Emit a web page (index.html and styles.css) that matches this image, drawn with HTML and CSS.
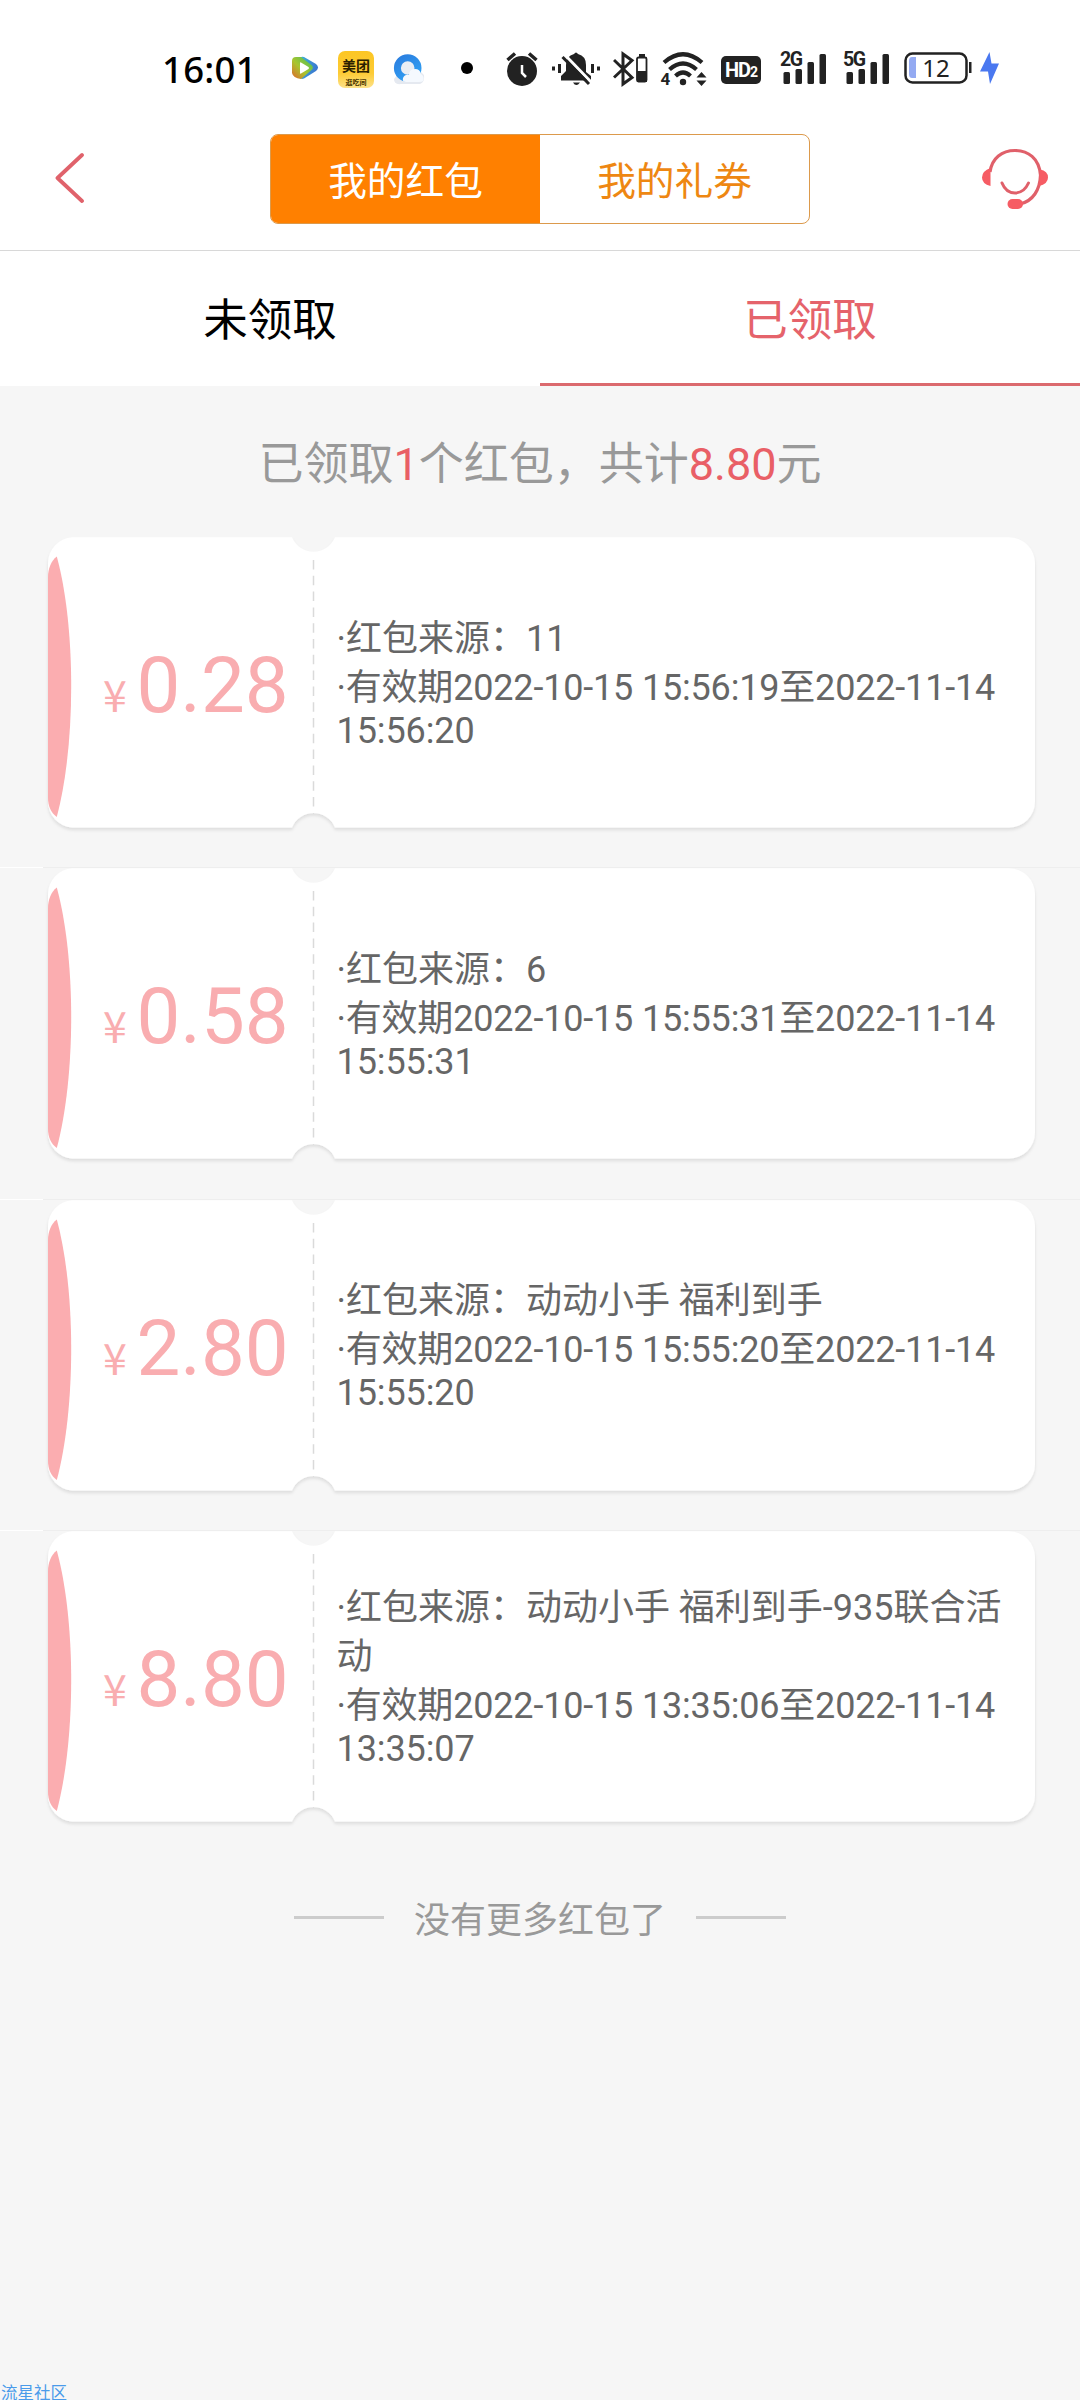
FILE: index.html
```html
<!DOCTYPE html>
<html lang="zh-CN">
<head>
<meta charset="utf-8">
<title>我的红包</title>
<link rel="stylesheet" href="styles.css">
</head>
<body>
<svg class="defs" width="0" height="0">
  <defs>
    <linearGradient id="play-a" x1="0" y1="0" x2="0.3" y2="1"><stop offset="0" stop-color="#5ac436"/><stop offset="0.5" stop-color="#e78a2a"/><stop offset="1" stop-color="#d9532c"/></linearGradient>
    <linearGradient id="play-b" x1="0" y1="0" x2="1" y2="0.4"><stop offset="0" stop-color="#3fb4d8"/><stop offset="1" stop-color="#3a78d0"/></linearGradient>
    <linearGradient id="play-c" x1="0" y1="1" x2="1" y2="0"><stop offset="0" stop-color="#e0662a"/><stop offset="0.45" stop-color="#a9c52e"/><stop offset="1" stop-color="#3fbf62"/></linearGradient>
    <linearGradient id="gold" x1="0" y1="0" x2="0" y2="1"><stop offset="0" stop-color="#fcc624"/><stop offset="0.6" stop-color="#fdcb35"/><stop offset="1" stop-color="#fde28a"/></linearGradient>
    <linearGradient id="ring" x1="0" y1="0" x2="0.6" y2="1"><stop offset="0" stop-color="#2b7fe0"/><stop offset="1" stop-color="#2f9df2"/></linearGradient>
    <filter id="ticket-shadow" x="-5%" y="-5%" width="110%" height="112%"><feDropShadow dx="0" dy="2.5" stdDeviation="1.8" flood-color="#000" flood-opacity="0.1"/></filter>
    <symbol id="ticket" viewBox="0 0 1006 310">
      <path filter="url(#ticket-shadow)" fill="#fff" d="M34 0.300H254A23.200 23.200 0 0 0 297 0.300H971A26 26 0 0 1 997 26V264.500A26 26 0 0 1 971 290.500H297A23.200 23.200 0 0 0 254 290.500H34A26 26 0 0 1 10 264.500V26A26 26 0 0 1 34 0.300Z"/>
      <path fill="#fbadb0" d="M18.800 19.500C38 90 38 208 18.800 280C13 276 10 269 10 261V40C10 32 13 24 18.800 19.500Z"/>
      <path stroke="#dadada" stroke-width="1.500" stroke-dasharray="9.500 6.300" d="M275.500 23V271"/>
    </symbol>
    <symbol id="signal" viewBox="0 0 44 34">
      <g fill="#222"><rect x="1.500" y="20" width="6.500" height="12" rx="1.500"/><rect x="13.500" y="17" width="6.500" height="15" rx="1.500"/><rect x="25.500" y="10" width="6.500" height="22" rx="1.500"/><rect x="37.500" y="2" width="6.500" height="30" rx="1.500"/></g>
    </symbol>
  </defs>
</svg>

<div class="status">
  <span class="clock">16:01</span>
  <svg class="ic-play" width="27" height="24" viewBox="0 0 27 24">
    <path fill="url(#play-b)" d="M7 2.500Q9 0 12 1L24 8Q28 11.500 24 15L12 22.500Q8 24 7 20Z"/>
    <path fill="url(#play-c)" d="M0 5Q0 1 4 1H9L20 9.500Q22 12 19.500 14L9 23Q1 22 0 17Z"/>
    <path fill="#fff" d="M8 7Q8 6 9 6.500L16.500 11Q17.500 12 16.500 13L9 17.500Q8 18 8 17Z"/>
  </svg>
  <svg class="ic-meituan" width="37" height="37" viewBox="0 0 37 37">
    <rect width="36" height="37" rx="7" fill="url(#gold)"/>
    <text class="mt-name" x="18" y="20">美团</text>
    <text class="mt-sub" x="18" y="34">逛吃间</text>
  </svg>
  <svg class="ic-browser" width="32" height="32" viewBox="0 0 32 32">
    <path fill="#e5e9f0" d="M1 26Q1 32 8 31H27Q32 29 31 22L25 16 4 22Z"/>
    <circle cx="14.700" cy="15" r="10.300" fill="#e9edf4" stroke="url(#ring)" stroke-width="7"/>
    <path fill="#f5f9fe" d="M13 29Q9 29 10 25Q12 21 16 22Q16 16 22 16Q27 16 28 21Q32 24 30 28Q29 29 26 29Z"/>
  </svg>
  <svg class="ic-dot" width="12" height="12"><circle cx="6" cy="6" r="6"/></svg>
  <svg class="ic-alarm" width="32" height="36" viewBox="0 0 32 36">
    <circle cx="16" cy="20" r="15" fill="#222"/>
    <path stroke="#222" stroke-width="3.500" d="M1.500 9 9 2.500M30.500 9 23 2.500"/>
    <path stroke="#fff" stroke-width="2.500" fill="none" d="M16 14v8l4 4"/>
  </svg>
  <svg class="ic-bell" width="48" height="36" viewBox="0 0 48 36">
    <path fill="#222" d="M22 3Q24 0 26 3Q34 5 34 14V21L39 25V29.500H9V25L14 20V14Q14 5 22 3ZM21 31.500H28Q26 34 24.500 34Q22.500 34 21 31.500ZM0 15.500h3v4H0zM6 13h3v9H6zM39 13h3v9h-3zM45 15.500h3v4h-3z"/>
    <path stroke="#fff" stroke-width="3" d="M13 4 40 32"/>
    <path stroke="#222" stroke-width="3" d="M10.500 6 37 33"/>
  </svg>
  <svg class="ic-bt" width="35" height="36" viewBox="0 0 35 36">
    <path fill="none" stroke="#222" stroke-width="3" d="M1 9 19 26.500 10 33V3L19 9.500 1 26.500"/>
    <path fill="#222" d="M26 3h6v3h-6z"/>
    <rect x="24" y="6.500" width="9.500" height="24" rx="1.500" fill="none" stroke="#222" stroke-width="1.800"/>
    <path fill="#222" d="M24 20h10v11H24z"/>
  </svg>
  <svg class="ic-wifi" width="48" height="36" viewBox="0 0 48 36">
    <g fill="none" stroke="#222" stroke-width="4.200"><path d="M4 11.500Q23 -5 42 11.500"/><path d="M9.500 18.500Q23 6.500 36.500 18.500"/><path d="M15.500 25Q23 18 30.500 25"/></g>
    <circle cx="23" cy="31" r="3.200" fill="#222"/>
    <path fill="#222" d="M41.500 21 46.500 26.500H36.500zM41.500 35 46.500 29.500H36.500z"/>
    <text class="wifi-gen" x="0.500" y="34">4</text>
  </svg>
  <span class="hd">HD<small>2</small></span>
  <span class="sim sim-a"><b>2G</b><svg width="44" height="34"><use href="#signal"/></svg></span>
  <span class="sim sim-b"><b>5G</b><svg width="44" height="34"><use href="#signal"/></svg></span>
  <svg class="ic-battery" width="68" height="32" viewBox="0 0 68 32">
    <rect x="1.500" y="1.500" width="61" height="29" rx="7" fill="none" stroke="#222" stroke-width="2.500"/>
    <path fill="#222" d="M65 10h2.500v11H65z"/>
    <path fill="#94aaf2" d="M12 5V26H8Q5 26 5 22V9Q5 5 8 5Z"/>
    <text class="battery-level" x="32" y="25">12</text>
  </svg>
  <svg class="ic-bolt" width="19" height="34" viewBox="0 0 19 34"><path fill="#4a78f0" d="M9.500 1 0 20.500H8L10 33 19 12.500H11.500Z"/></svg>
</div>

<header class="header">
  <svg width="30" height="52" viewBox="0 0 30 52"><path fill="none" stroke="#e0626b" stroke-width="3.800" stroke-linecap="round" stroke-linejoin="round" d="M27 3 2.500 26 27 49"/></svg>
  <div class="segment">
    <span class="seg seg-on">我的红包</span>
    <span class="seg">我的礼券</span>
  </div>
  <svg class="service" width="66" height="62" viewBox="0 0 66 62">
    <path fill="none" stroke="#e0606a" stroke-width="3.200" d="M8 24C10 10 20 2.500 33 2.500S57 10 58.500 27C58 42 51 53 38 56"/>
    <path fill="#f65c64" d="M8.500 20V38Q0 36 0 29.500T8.500 20ZM58 21.500Q66 23 66 29.500T57 38Z"/>
    <rect x="25.500" y="51" width="15.500" height="10" rx="5" fill="#f65c64"/>
    <path fill="none" stroke="#e0606a" stroke-width="3" stroke-linecap="round" d="M20 35Q24 45 33 45T46.500 35"/>
  </svg>
</header>

<nav class="tabs">
  <span class="tab">未领取</span>
  <span class="tab tab-on">已领取</span>
</nav>

<main class="content">
  <p class="summary">已领取<em>1</em>个红包，共计<em>8.80</em>元</p>
  <ul class="list">
    <li class="ticket">
      <svg class="shape" width="1006" height="310"><use href="#ticket"/></svg>
      <div class="amount"><i>¥</i>0.28</div>
      <div class="info"><p>·红包来源：11</p><p class="date">·有效期2022-10-15 15:56:19至2022-11-14</p><p class="latin">15:56:20</p></div>
    </li>
    <li class="ticket">
      <svg class="shape" width="1006" height="310"><use href="#ticket"/></svg>
      <div class="amount"><i>¥</i>0.58</div>
      <div class="info"><p>·红包来源：6</p><p class="date">·有效期2022-10-15 15:55:31至2022-11-14</p><p class="latin">15:55:31</p></div>
    </li>
    <li class="ticket">
      <svg class="shape" width="1006" height="310"><use href="#ticket"/></svg>
      <div class="amount"><i>¥</i>2.80</div>
      <div class="info"><p>·红包来源：动动小手 福利到手</p><p class="date">·有效期2022-10-15 15:55:20至2022-11-14</p><p class="latin">15:55:20</p></div>
    </li>
    <li class="ticket">
      <svg class="shape" width="1006" height="310"><use href="#ticket"/></svg>
      <div class="amount"><i>¥</i>8.80</div>
      <div class="info"><p>·红包来源：动动小手 福利到手-935联合活</p><p>动</p><p class="date">·有效期2022-10-15 13:35:06至2022-11-14</p><p class="latin">13:35:07</p></div>
    </li>
  </ul>
  <p class="end">没有更多红包了</p>
  <p class="community">流星社区</p>
</main>
</body>
</html>
```

FILE: styles.css
```css
* { box-sizing: border-box; }
body, p, ul { margin: 0; padding: 0; }
body {
  width: 1080px;
  height: 2400px;
  display: flex;
  flex-direction: column;
  background: #fff;
  font-family: Roboto, "Noto Sans CJK SC", sans-serif;
  overflow: hidden;
}
svg { display: block; flex: none; }
.defs { position: absolute; }

/* status bar */
.status {
  height: 120px;
  padding: 0 0 0 162px;
  display: flex;
  align-items: flex-start;
  flex: none;
}
.clock {
  width: 130px;
  margin-top: 48px;
  font: 500 36.500px/42px "Noto Sans", sans-serif;
  letter-spacing: 0.3px;
  color: #000;
}
.ic-play { margin-top: 56px; }
.ic-meituan { margin: 51px 0 0 19px; }
.mt-name { font: 700 14px "Noto Sans CJK SC", sans-serif; text-anchor: middle; fill: #2b2000; }
.mt-sub { font: 700 7px "Noto Sans CJK SC", sans-serif; text-anchor: middle; fill: #4a3500; }
.ic-browser { margin: 53px 0 0 18px; }
.ic-dot { margin: 62px 0 0 36px; }
.ic-alarm { margin: 51px 0 0 33px; }
.ic-bell { margin: 51px 0 0 14px; }
.ic-bt { margin: 51px 0 0 13px; }
.ic-wifi { margin: 51px 0 0 12px; overflow: visible; }
.wifi-gen { font: 700 17px Roboto, sans-serif; fill: #222; }
.hd {
  width: 40px;
  height: 28px;
  margin: 56px 0 0 13px;
  border-radius: 5px;
  background: #222;
  color: #fff;
  font: 700 20px/28px Roboto, sans-serif;
  letter-spacing: -1px;
  text-align: center;
  white-space: nowrap;
}
.hd small { font-size: 14px; }
.sim { position: relative; margin-top: 52px; width: 44px; height: 34px; }
.sim b {
  position: absolute;
  left: -2px;
  top: -1px;
  font: 700 19.500px/18px Roboto, sans-serif;
  letter-spacing: -1.5px;
  color: #222;
}
.sim-a { margin-left: 21px; }
.sim-b { margin-left: 19px; }
.ic-battery { margin: 52px 0 0 15px; }
.battery-level { font: 400 24px "Noto Sans", sans-serif; text-anchor: middle; fill: #222; }
.ic-bolt { margin: 51px 0 0 8px; }

/* title bar */
.header {
  height: 131px;
  padding: 14px 32px 0 54.500px;
  display: flex;
  align-items: flex-start;
  flex: none;
  border-bottom: 1px solid #d8d8d8;
}
.header > svg { margin-top: 18px; }
.header > .service { margin: 14px 0 0 auto; }
.segment {
  width: 540px;
  height: 90px;
  margin-left: 185.500px;
  display: flex;
  flex: none;
  border: 1px solid #dc9a4c;
  border-radius: 8px;
  overflow: hidden;
}
.seg {
  flex: 1;
  font-size: 38.700px;
  line-height: 94px;
  text-align: center;
  color: #ee8712;
}
.seg-on { background: #ff8000; color: #fff; }

.tabs { height: 135px; display: flex; flex: none; }
.tab {
  flex: 1;
  font-size: 44.500px;
  line-height: 141px;
  text-align: center;
  color: #000;
}
.tab-on { color: #e5636b; border-bottom: 3px solid #db6a6e; }

/* list */
.content { flex: 1; background: #f6f6f6; display: flex; flex-direction: column; }
.summary {
  height: 151px;
  font-size: 45px;
  line-height: 157px;
  text-align: center;
  color: #999;
}
.summary em { font-style: normal; color: #e95f66; }
.list { list-style: none; display: flex; flex-direction: column; }
.ticket {
  position: relative;
  height: 331.300px;
  padding: 0 46px 41px 48px;
  display: flex;
}
.ticket + .ticket::before {
  content: "";
  position: absolute;
  left: 0;
  top: -1px;
  width: 100%;
  height: 1px;
  background: linear-gradient(90deg, #fff 43px, #eee 43px);
}
.shape { position: absolute; left: 38px; top: 0; }
.amount {
  position: relative;
  width: 288.500px;
  padding: 103px 0 0 55px;
  font-size: 78px;
  line-height: 92px;
  white-space: nowrap;
  color: #f9adb0;
}
.amount i {
  display: inline-block;
  width: 33.500px;
  font: 400 43px/1 "Noto Sans CJK SC", sans-serif;
}
.info {
  position: relative;
  display: flex;
  flex-direction: column;
  justify-content: center;
  font-size: 36px;
  line-height: 49px;
  white-space: nowrap;
  color: #666;
}
.info .date { letter-spacing: -0.18px; }
.info .latin { line-height: 37px; letter-spacing: -0.1px; }
.end {
  display: flex;
  justify-content: center;
  align-items: center;
  gap: 30px;
  margin-top: 29px;
  height: 52px;
  font-size: 36px;
  color: #999;
}
.end::before, .end::after { content: ""; width: 90px; height: 3px; background: #ccc; }
.community {
  margin-top: auto;
  padding-left: 1px;
  font-size: 16.500px;
  line-height: 17px;
  height: 15px;
  color: #4a9bea;
}
```
